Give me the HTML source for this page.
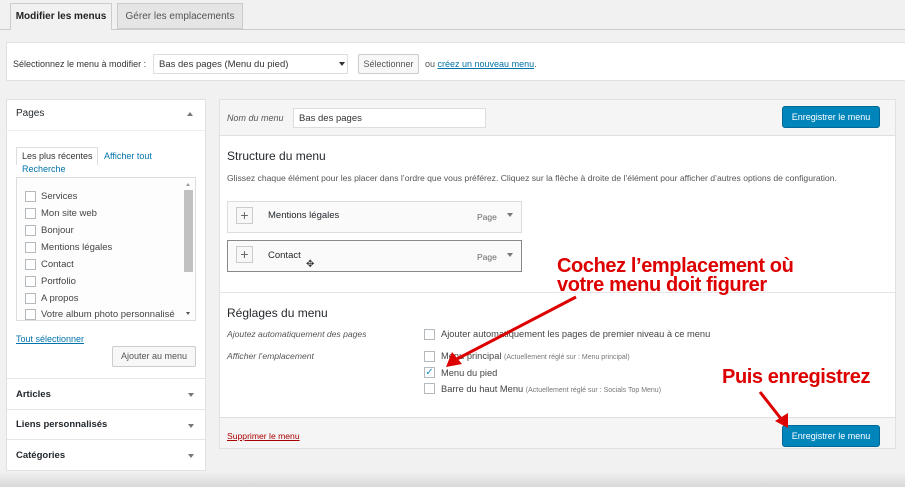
<!DOCTYPE html>
<html><head><meta charset="utf-8"><style>
*{box-sizing:border-box;margin:0;padding:0}
body{width:905px;height:487px;background:#f1f1f1;font-family:"Liberation Sans",sans-serif;color:#444;position:relative;overflow:hidden;font-size:9.5px}
.a{position:absolute;white-space:nowrap}
.box{position:absolute;background:#fff;border:1px solid #e1e1e1}
.cb{position:absolute;width:11px;height:11px;border:1px solid #b4b9be;background:#fff}
.btn{position:absolute;border:1px solid #ccc;background:#f7f7f7;border-radius:2px;color:#555;text-align:center}
.blue{position:absolute;background:#0085ba;border:1px solid #006799;border-radius:3px;color:#fff;text-align:center;font-size:9px}
.tri{position:absolute;width:0;height:0;border-left:3px solid transparent;border-right:3px solid transparent;border-top:4px solid #777}
.red{position:absolute;color:#d00;font-weight:bold;font-size:20px;white-space:nowrap;letter-spacing:-0.4px;line-height:19px}
</style></head><body>
<div class="a" style="left:0;top:29px;width:905px;height:1px;background:#ccc"></div>
<div class="a" style="left:10px;top:3px;width:102px;height:27px;border:1px solid #ccc;border-bottom:none;background:#f1f1f1;font-size:10px;font-weight:bold;color:#222;text-align:center;line-height:26px">Modifier les menus</div>
<div class="a" style="left:117px;top:3px;width:126px;height:26px;border:1px solid #ccc;background:#e5e5e5;font-size:10px;color:#555;text-align:center;line-height:25px">Gérer les emplacements</div>
<div class="box" style="left:6px;top:42px;width:905px;height:39px"></div>
<div class="a" style="left:13px;top:59px;font-size:9px;color:#333">Sélectionnez le menu à modifier :</div>
<div class="a" style="left:153px;top:54px;width:195px;height:20px;border:1px solid #ddd;background:#fff;font-size:9.5px;line-height:19px;padding-left:5px;color:#333">Bas des pages (Menu du pied)</div>
<div class="tri" style="left:339px;top:62px;border-top-color:#333"></div>
<div class="btn" style="left:358px;top:54px;width:61px;height:20px;font-size:9px;line-height:18px">Sélectionner</div>
<div class="a" style="left:425px;top:59px;font-size:9px;color:#555">ou <span style="color:#0073aa;text-decoration:underline">créez un nouveau menu</span>.</div>
<div class="box" style="left:6px;top:99px;width:200px;height:372px"></div>
<div class="a" style="left:16px;top:108px;font-size:10px;color:#23282d">Pages</div>
<div class="a" style="left:187px;top:112px;width:0;height:0;border-left:3px solid transparent;border-right:3px solid transparent;border-bottom:4px solid #777"></div>
<div class="a" style="left:7px;top:130px;width:198px;height:1px;background:#eee"></div>
<div class="a" style="left:16px;top:147px;width:82px;height:18px;border:1px solid #ddd;border-bottom:none;background:#fff;font-size:9px;color:#333;padding:3px 0 0 5px">Les plus récentes</div>
<div class="a" style="left:104px;top:151px;font-size:9px;color:#0073aa">Afficher tout</div>
<div class="a" style="left:22px;top:164px;font-size:9px;color:#0073aa">Recherche</div>
<div class="a" style="left:16px;top:177px;width:180px;height:144px;border:1px solid #ddd;background:#fdfdfd"></div>
<div class="a" style="left:184px;top:190px;width:9px;height:82px;background:#c1c1c1"></div>
<div class="a" style="left:186px;top:183px;width:0;height:0;border-left:2px solid transparent;border-right:2px solid transparent;border-bottom:3px solid #999"></div>
<div class="a" style="left:186px;top:312px;width:0;height:0;border-left:2px solid transparent;border-right:2px solid transparent;border-top:3px solid #555"></div>
<div class="cb" style="left:25px;top:191px"></div><div class="a" style="left:41px;top:191px;font-size:9.5px">Services</div>
<div class="cb" style="left:25px;top:208px"></div><div class="a" style="left:41px;top:208px;font-size:9.5px">Mon site web</div>
<div class="cb" style="left:25px;top:225px"></div><div class="a" style="left:41px;top:225px;font-size:9.5px">Bonjour</div>
<div class="cb" style="left:25px;top:242px"></div><div class="a" style="left:41px;top:242px;font-size:9.5px">Mentions légales</div>
<div class="cb" style="left:25px;top:259px"></div><div class="a" style="left:41px;top:259px;font-size:9.5px">Contact</div>
<div class="cb" style="left:25px;top:276px"></div><div class="a" style="left:41px;top:276px;font-size:9.5px">Portfolio</div>
<div class="cb" style="left:25px;top:293px"></div><div class="a" style="left:41px;top:293px;font-size:9.5px">A propos</div>
<div class="cb" style="left:25px;top:309px"></div><div class="a" style="left:41px;top:309px;font-size:9.5px">Votre album photo personnalisé</div>
<div class="a" style="left:16px;top:334px;font-size:9px;color:#0073aa;text-decoration:underline">Tout sélectionner</div>
<div class="btn" style="left:112px;top:346px;width:84px;height:21px;font-size:9px;line-height:19px">Ajouter au menu</div>
<div class="a" style="left:7px;top:378px;width:198px;height:1px;background:#e5e5e5"></div>
<div class="a" style="left:16px;top:389px;font-size:9.5px;font-weight:bold;color:#23282d">Articles</div>
<div class="tri" style="left:188px;top:393px"></div>
<div class="a" style="left:7px;top:409px;width:198px;height:1px;background:#e5e5e5"></div>
<div class="a" style="left:16px;top:419px;font-size:9.5px;font-weight:bold;color:#23282d">Liens personnalisés</div>
<div class="tri" style="left:188px;top:424px"></div>
<div class="a" style="left:7px;top:439px;width:198px;height:1px;background:#e5e5e5"></div>
<div class="a" style="left:16px;top:450px;font-size:9.5px;font-weight:bold;color:#23282d">Catégories</div>
<div class="tri" style="left:188px;top:454px"></div>
<div class="box" style="left:219px;top:99px;width:677px;height:350px"></div>
<div class="a" style="left:220px;top:100px;width:675px;height:36px;background:#f5f5f5;border-bottom:1px solid #dfdfdf"></div>
<div class="a" style="left:227px;top:113px;font-size:9px;font-style:italic;color:#555">Nom du menu</div>
<div class="a" style="left:293px;top:108px;width:193px;height:20px;border:1px solid #ddd;background:#fff;font-size:9.5px;line-height:19px;padding-left:5px;color:#333">Bas des pages</div>
<div class="blue" style="left:782px;top:106px;width:98px;height:22px;line-height:20px">Enregistrer le menu</div>
<div class="a" style="left:227px;top:149px;font-size:12px;color:#23282d">Structure du menu</div>
<div class="a" style="left:227px;top:173px;font-size:8.6px;color:#555">Glissez chaque élément pour les placer dans l’ordre que vous préférez. Cliquez sur la flèche à droite de l’élément pour afficher d’autres options de configuration.</div>
<div class="a" style="left:227px;top:201px;width:295px;height:32px;border:1px solid #ddd;background:#fafafa"></div>
<div class="a" style="left:236px;top:207px;width:17px;height:17px;border:1px solid #ccc;background:#f7f7f7;font-size:14px;line-height:14px;text-align:center;color:#666">+</div>
<div class="a" style="left:268px;top:210px;font-size:9.5px;color:#23282d">Mentions légales</div>
<div class="a" style="left:477px;top:212px;font-size:8.5px;color:#666">Page</div>
<div class="tri" style="left:507px;top:213px"></div>
<div class="a" style="left:227px;top:240px;width:295px;height:32px;border:1px solid #888;background:#fafafa"></div>
<div class="a" style="left:236px;top:246px;width:17px;height:17px;border:1px solid #ccc;background:#f7f7f7;font-size:14px;line-height:14px;text-align:center;color:#666">+</div>
<div class="a" style="left:268px;top:250px;font-size:9.5px;color:#23282d">Contact</div>
<div class="a" style="left:306px;top:259px;font-size:10px;color:#333">✥</div>
<div class="a" style="left:477px;top:252px;font-size:8.5px;color:#666">Page</div>
<div class="tri" style="left:507px;top:253px"></div>
<div class="a" style="left:220px;top:292px;width:675px;height:1px;background:#e5e5e5"></div>
<div class="a" style="left:227px;top:306px;font-size:12px;color:#23282d">Réglages du menu</div>
<div class="a" style="left:227px;top:329px;font-size:8.6px;font-style:italic;color:#555">Ajoutez automatiquement des pages</div>
<div class="a" style="left:227px;top:351px;font-size:8.6px;font-style:italic;color:#555">Afficher l’emplacement</div>
<div class="cb" style="left:424px;top:329px"></div><div class="a" style="left:441px;top:329px;font-size:9.3px">Ajouter automatiquement les pages de premier niveau à ce menu</div>
<div class="cb" style="left:424px;top:351px"></div><div class="a" style="left:441px;top:351px;font-size:9.3px">Menu principal <span style="font-size:7px;color:#777">(Actuellement réglé sur : Menu principal)</span></div>
<div class="cb" style="left:424px;top:367px;color:#1e8cbe;font-size:10px;line-height:9px;text-align:center">✓</div><div class="a" style="left:441px;top:368px;font-size:9.3px">Menu du pied</div>
<div class="cb" style="left:424px;top:383px"></div><div class="a" style="left:441px;top:384px;font-size:9.3px">Barre du haut Menu <span style="font-size:7px;color:#777">(Actuellement réglé sur : Socials Top Menu)</span></div>
<div class="a" style="left:220px;top:417px;width:675px;height:31px;background:#f5f5f5;border-top:1px solid #dfdfdf"></div>
<div class="a" style="left:227px;top:431px;font-size:8.6px;color:#a00;text-decoration:underline">Supprimer le menu</div>
<div class="blue" style="left:782px;top:425px;width:98px;height:22px;line-height:20px">Enregistrer le menu</div>
<div class="a" style="left:0;top:472px;width:905px;height:15px;background:linear-gradient(#f1f1f1,#d8d8d8)"></div>
<div class="red" style="left:557px;top:257px">Cochez l’emplacement où</div>
<div class="red" style="left:557px;top:276px">votre menu doit figurer</div>
<div class="red" style="left:722px;top:368px">Puis enregistrez</div>
<svg class="a" style="left:0;top:0" width="905" height="487">
<line x1="576" y1="297" x2="455" y2="360" stroke="#d00" stroke-width="3"/>
<polygon points="446,367 452,352 462,364" fill="#d00"/>
<line x1="760" y1="392" x2="782" y2="420" stroke="#d00" stroke-width="3"/>
<polygon points="788,428 775,421 788,413" fill="#d00"/>
</svg>
</body></html>
